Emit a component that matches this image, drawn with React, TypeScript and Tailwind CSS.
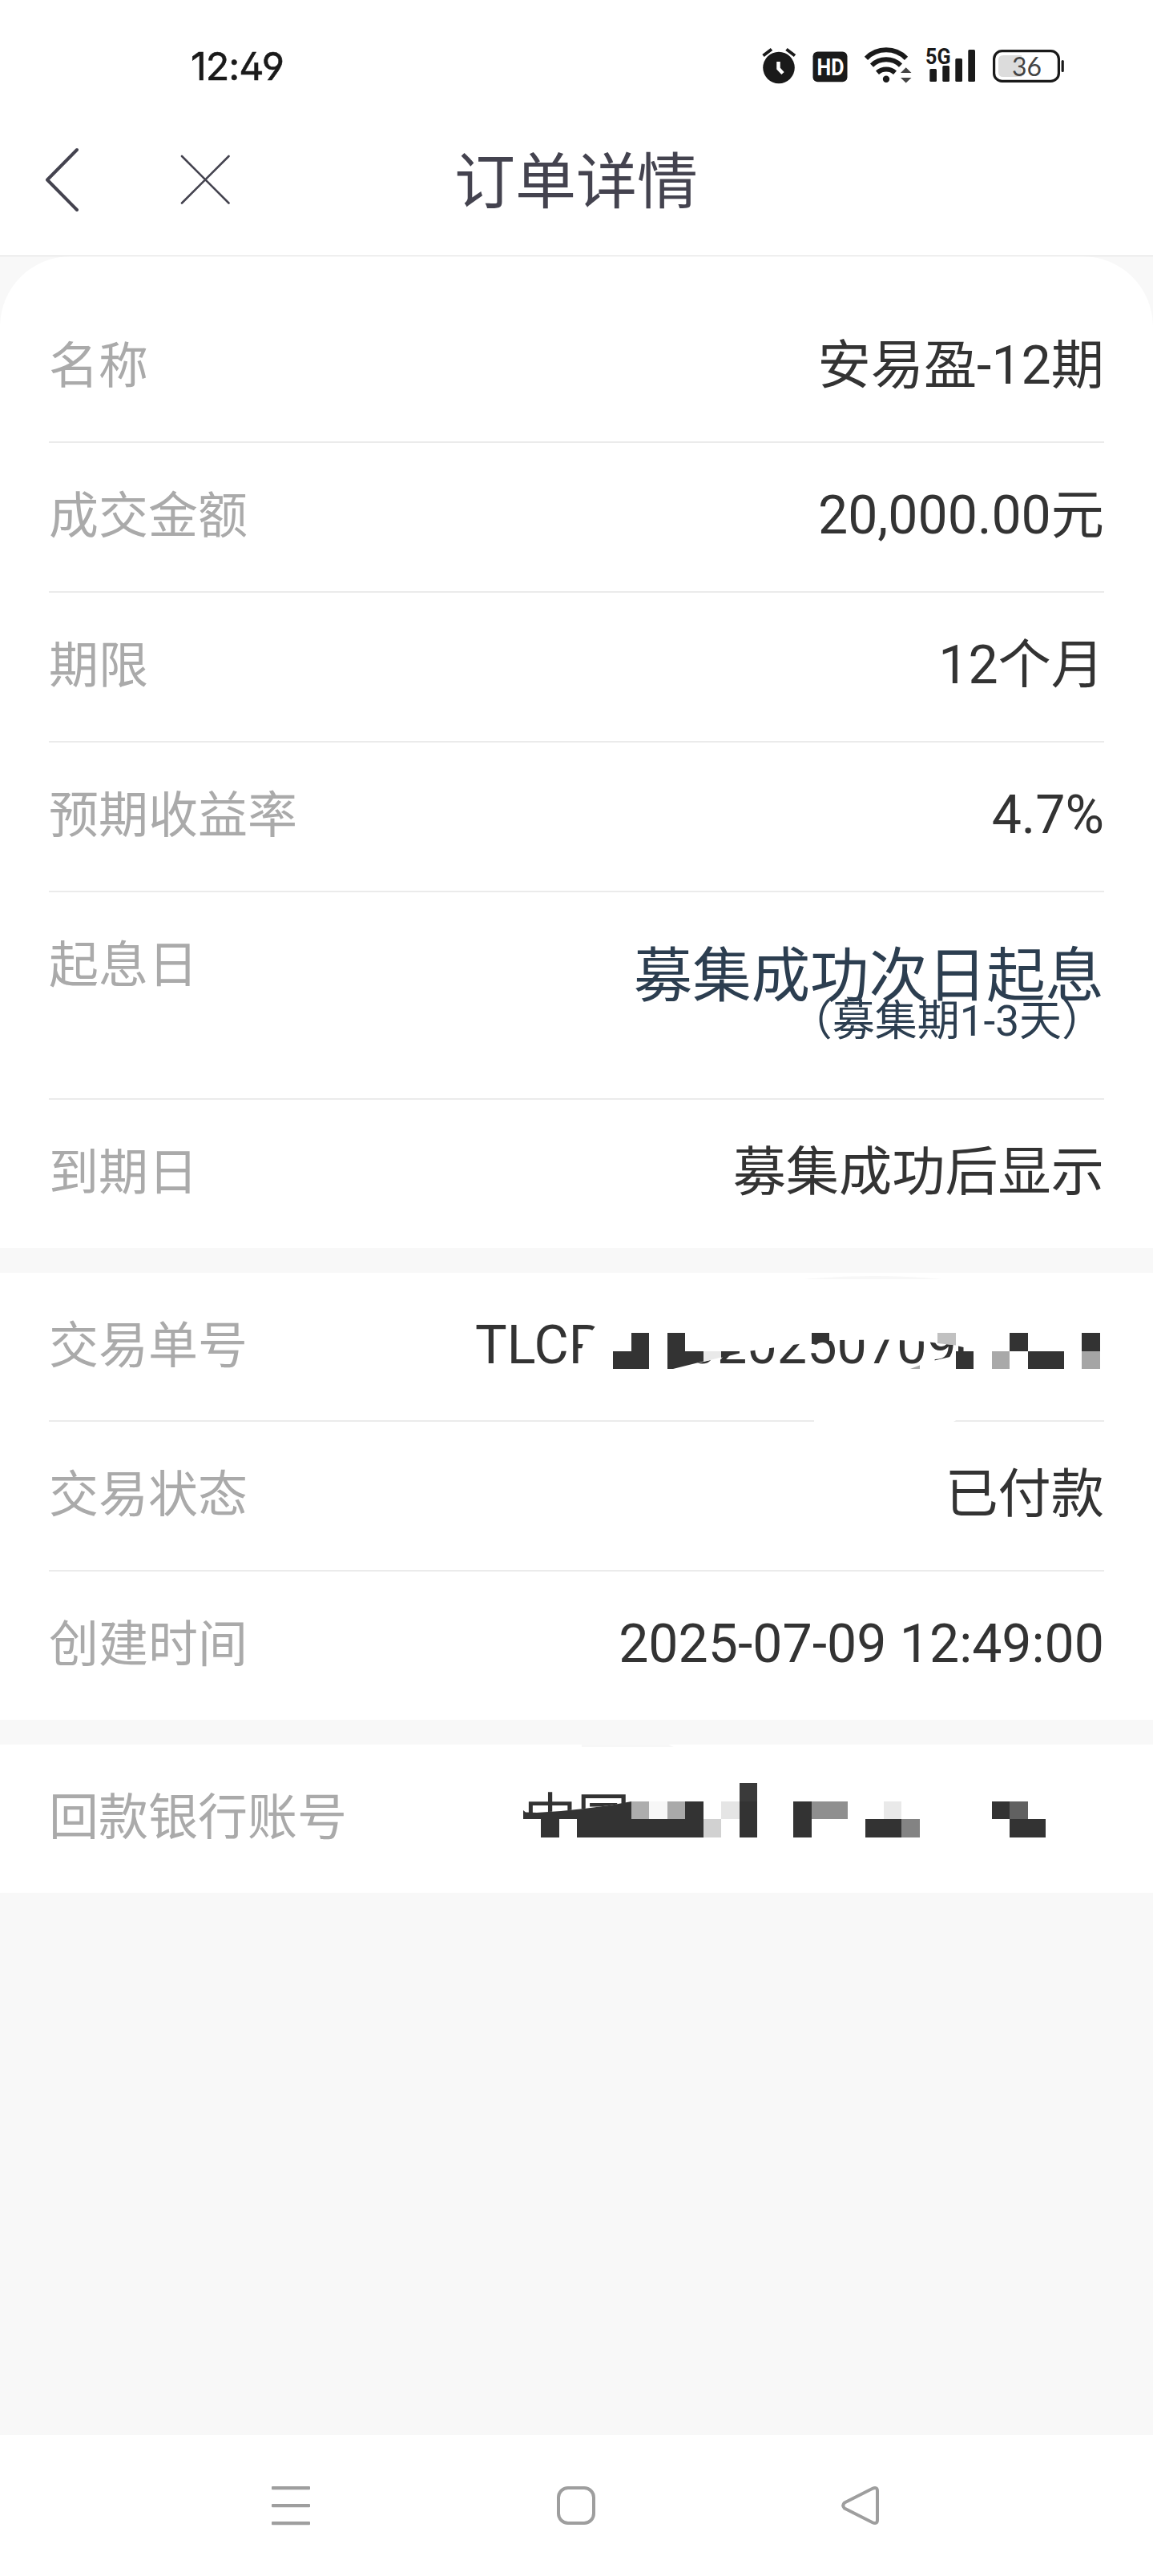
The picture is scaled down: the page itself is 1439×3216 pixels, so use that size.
import type { ReactNode } from 'react';

const DARK = '#333333';

type Block = [x: number, y: number, w: number, h: number, fill: string];

const orderNoBlocks: Block[] = [
    [788, 1664, 22, 23, DARK],
    [765, 1687, 45, 22, DARK],
    [833, 1664, 22, 23, DARK],
    [1193, 1687, 22, 22, DARK],
    [1238, 1687, 22, 22, '#a9a9a9'],
    [1260, 1664, 23, 23, DARK],
    [1283, 1687, 45, 22, DARK],
    [1350, 1664, 23, 23, DARK],
    [1350, 1687, 23, 22, '#a5a5a5'],
];

const accountBlocks: Block[] = [
    [675, 2271, 23, 23, DARK],
    [720, 2271, 158, 23, DARK],
    [855, 2249, 23, 22, DARK],
    [788, 2249, 22, 22, '#adadad'],
    [810, 2249, 23, 22, '#f7f7f7'],
    [833, 2249, 22, 22, '#a9a9a9'],
    [878, 2271, 22, 23, '#d1d1d1'],
    [900, 2249, 23, 22, '#e5e5e5'],
    [923, 2226, 22, 23, '#3a3a3a'],
    [923, 2249, 22, 45, DARK],
    [990, 2249, 23, 45, DARK],
    [1013, 2249, 45, 22, '#8f8f8f'],
    [1103, 2249, 22, 22, '#e9e9e9'],
    [1080, 2271, 45, 23, DARK],
    [1125, 2271, 23, 23, '#838383'],
    [1238, 2249, 22, 22, DARK],
    [1260, 2249, 23, 22, '#616161'],
    [1260, 2271, 45, 23, DARK],
];

function Blocks({ items }: { items: Block[] }) {
    return (
        <g shapeRendering="crispEdges">
            {items.map(([x, y, w, h, fill], i) => (
                <rect key={i} x={x} y={y} width={w} height={h} fill={fill} />
            ))}
        </g>
    );
}

function StatusIcons() {
    return (
        <div className="flex items-center text-[#1a1a1a]">
            {/* alarm */}
            <svg width="50" height="50" viewBox="948 57 50 50" fill="none" stroke="currentColor">
                <circle cx="972" cy="84.5" r="19.8" fill="currentColor" stroke="none" />
                <path d="M952.5 69.5 963 61.5M981.5 61.5 992 69.5" strokeWidth="4" />
                <path d="M971.5 77v8.5l5.5 6" stroke="#fff" strokeWidth="4.5" />
            </svg>
            <svg className="ml-3.5" width="48" height="50" viewBox="1012 57 48 50">
                <rect x="1014.5" y="64.5" width="43" height="37.7" rx="6" fill="currentColor" />
                <text x="1019.5" y="94" textLength="34" lengthAdjust="spacingAndGlyphs" fill="#fff" fontSize="29.5" fontWeight="700" fontFamily="Roboto, sans-serif">HD</text>
            </svg>
            <svg className="ml-4" width="64" height="50" viewBox="1076 57 64 50" fill="none" stroke="currentColor" strokeWidth="6">
                <path d="M1081 72.8A35 35 0 0 1 1131 72.8M1088 81.6A26 26 0 0 1 1124 81.6M1095 90.8A16.5 16.5 0 0 1 1117 90.8" />
                <circle cx="1106" cy="98.7" r="4.2" fill="currentColor" stroke="none" />
                <path d="M1124 91h13.5l-6.8-6.7zM1124 97h13.5l-6.8 6.5z" fill="#444" stroke="none" />
            </svg>
            <svg className="ml-2" width="74" height="66" viewBox="1148 49 74 66" fill="currentColor">
                <text x="1155" y="79.7" textLength="31.5" lengthAdjust="spacingAndGlyphs" fontSize="28.5" fontWeight="700" fontFamily="Roboto, sans-serif">5G</text>
                <rect x="1160.3" y="86" width="8.7" height="16" rx="1.5" />
                <rect x="1176.3" y="82" width="8.7" height="20" rx="1.5" />
                <rect x="1192.3" y="73" width="8.7" height="29" rx="1.5" />
                <rect x="1208.3" y="62" width="8.7" height="40" rx="1.5" />
            </svg>
            <svg className="ml-3.5" width="94" height="50" viewBox="1236 57 94 50">
                <rect x="1240.6" y="63.6" width="80.8" height="37.8" rx="10" fill="none" stroke="currentColor" strokeWidth="3.2" />
                <path d="M1275 69v27h-23q-6 0-6-6v-15q0-6 6-6z" fill="#dcdcdc" />
                <rect x="1324.6" y="75" width="3.2" height="15" rx="1.5" fill="currentColor" />
                <text x="1263" y="94.5" textLength="37" lengthAdjust="spacingAndGlyphs" fill="#444" fontSize="32" fontFamily="Lato, sans-serif">36</text>
            </svg>
        </div>
    );
}

function OrderNo() {
    return (
        <svg className="absolute left-[499px] top-0" width="879" height="186" viewBox="560 1589 879 186">
            <defs>
                <clipPath id="orderDigits">
                    <path d="M838 1709 887 1698 923 1688.5 965 1682.5 997 1678 1012 1676 1047 1673 1110 1672.5 1150 1674.5 1190 1679V1693L1164 1699 1150 1712H838z" />
                </clipPath>
            </defs>
            <path d="M1004 1597q86-8 172 0z" fill="#f7f7f7" />
            <g fill={DARK} fontSize="66.5" fontFamily="Roboto, sans-serif">
                <text x="593" y="1702">TLCP</text>
                <text x="857.7" y="1702" clipPath="url(#orderDigits)">020250709</text>
            </g>
            <path d="M743 1656 739 1661 728 1677 726 1684V1692H770V1648H745z" fill="#fff" />
            <Blocks items={orderNoBlocks} />
            <path d="M833 1687H878V1699.5L840 1709H833z" fill={DARK} />
            <path d="M878 1687H900V1694.5L878 1700z" fill="#e9e9e9" />
            <path d="M900 1687H923V1689.5L900 1695z" fill={DARK} />
            <path d="M1013 1664H1035V1675L1024 1676 1013 1678z" fill={DARK} />
            <path d="M1170 1664H1193V1679.5L1170 1677z" fill="#c1c1c1" />
            <path d="M1196 1680.5 1202.500 1682V1688L1196 1690z" fill={DARK} />
            <path d="M1136 1709 1148 1704.500V1709z" fill="#a9a9a9" />
            {/* erased part of the divider */}
            <path d="M1016 1772H1195L1190 1775H1016z" fill="#fff" />
        </svg>
    );
}

function BankAccount() {
    return (
        <svg className="absolute left-[499px] top-0" width="879" height="185" viewBox="560 2178 879 185">
            <defs>
                <clipPath id="bankName">
                    <path d="M650 2178H788V2250L760 2254 729 2258 700 2261 670 2263H650z" />
                </clipPath>
            </defs>
            <path d="M726 2178H834L841 2181H726z" fill="#f7f7f7" />
            <text x="653.5" y="2293.5" clipPath="url(#bankName)" fill={DARK} fontSize="66.5" fontFamily="'Noto Sans CJK SC', sans-serif">中国</text>
            <path d="M653 2260 656 2262.5 670 2263 700 2261 729 2258 760 2254 788 2249V2271H653z" fill={DARK} />
            <Blocks items={accountBlocks} />
        </svg>
    );
}

function Row({ label, className = '', children }: { label: string; className?: string; children: ReactNode }) {
    return (
        <div className={`relative flex justify-between border-[#ebebeb] ${className}`}>
            <span className="pt-[47px] text-[62px] leading-[90px] text-[#aaaaaa]">{label}</span>
            {children}
        </div>
    );
}

function Value({ children }: { children: ReactNode }) {
    return <span className="pt-[46px] text-[66.2px] leading-[90px] text-[#333333]">{children}</span>;
}

export default function App() {
    return (
        <div className="flex h-[3216px] w-[1439px] flex-col bg-[#f8f8f8] font-[Roboto,'Noto_Sans_CJK_SC',sans-serif]">
            <header className="h-80 border-b border-[#dddddd] bg-white">
                <div className="flex h-[164px] items-center justify-between pl-[238px] pr-[109px]">
                    <span className="pt-0.5 font-[Inter,sans-serif] text-[48.5px] tracking-[-1px] text-[#1a1a1a] [-webkit-text-stroke:0.6px_#1a1a1a] [font-feature-settings:'cv03','cv04','ss01']">12:49</span>
                    <StatusIcons />
                </div>
                <div className="flex h-[120px] items-center">
                    <svg className="ml-[50px]" width="60" height="90" viewBox="50 178 60 90" fill="none" stroke="#44434f" strokeWidth="4" strokeLinecap="round" strokeLinejoin="round">
                        <path d="M96 186 59 223.500 96 261" />
                    </svg>
                    <svg className="ml-[110px]" width="72" height="72" viewBox="220 188 72 72" fill="none" stroke="#44434f" strokeWidth="2.6" strokeLinecap="round">
                        <path d="M227 195 285.500 253.500M285.500 195 227 253.500" />
                    </svg>
                    <h1 className="ml-[275px] pt-2 text-[76px] leading-[120px] text-[#44434f]">订单详情</h1>
                </div>
            </header>

            <section className="rounded-t-[88px] bg-white px-[61px] pt-[46px]">
                <Row label="名称" className="h-[187px] border-b-2"><Value>安易盈-12期</Value></Row>
                <Row label="成交金额" className="h-[187px] border-b-2"><Value>20,000.00元</Value></Row>
                <Row label="期限" className="h-[187px] border-b-2"><Value>12个月</Value></Row>
                <Row label="预期收益率" className="h-[187px] border-b-2"><Value>4.7%</Value></Row>
                <Row label="起息日" className="h-[259px] border-b-2">
                    <div className="flex flex-col items-end pt-[77px] text-[#2c3e50]">
                        <span className="text-[73.4px] leading-[56px]">募集成功次日起息</span>
                        <span className="text-[53px] leading-[56px]">（募集期1-3天）</span>
                    </div>
                </Row>
                <Row label="到期日" className="h-[185px]"><Value>募集成功后显示</Value></Row>
            </section>

            <section className="mt-[31px] bg-white px-[61px]">
                <Row label="交易单号" className="h-[186px] border-b-2"><OrderNo /></Row>
                <Row label="交易状态" className="h-[187px] border-b-2"><Value>已付款</Value></Row>
                <Row label="创建时间" className="h-[185px]"><Value>2025-07-09 12:49:00</Value></Row>
            </section>

            <section className="mt-[31px] bg-white px-[61px]">
                <Row label="回款银行账号" className="h-[185px]"><BankAccount /></Row>
            </section>

            {/* system navigation */}
            <nav className="mt-auto flex h-44 items-center justify-between bg-white pl-[335px] pr-[337px]">
                <svg width="56" height="56" viewBox="335 3100 56 56" fill="#9e9e9e">
                    <rect x="339" y="3104" width="48" height="4.300" rx="1" />
                    <rect x="339" y="3126" width="48" height="4.300" rx="1" />
                    <rect x="339" y="3148" width="48" height="4.300" rx="1" />
                </svg>
                <svg width="56" height="56" viewBox="691 3100 56 56" fill="none" stroke="#9e9e9e" strokeWidth="4">
                    <rect x="697" y="3106" width="44" height="44" rx="12" />
                </svg>
                <svg width="56" height="56" viewBox="1046 3100 56 56" fill="none" stroke="#9e9e9e" strokeWidth="4" strokeLinejoin="round">
                    <path d="M1054 3124.500 1088.500 3107Q1095 3104 1095 3110V3146Q1095 3152 1088.500 3149L1054 3131.500Q1050.500 3128 1054 3124.500z" />
                </svg>
            </nav>
        </div>
    );
}
